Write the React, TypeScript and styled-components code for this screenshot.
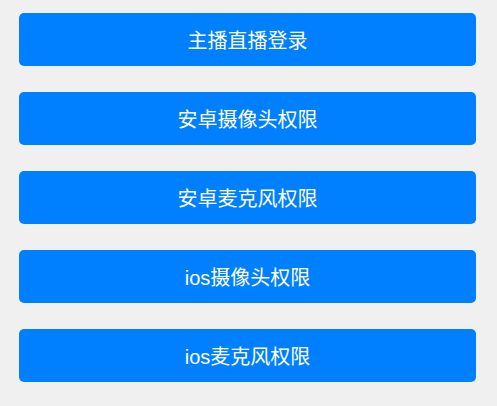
import * as React from "react";
import styled, { createGlobalStyle } from "styled-components";

const GlobalStyle = createGlobalStyle`
	html, body {
		margin: 0;
		padding: 0;
		background-color: #f0f0f0;
	}
	body {
		font-family: "Noto Sans CJK SC", "Liberation Sans", sans-serif;
	}
`;

const Page = styled.div`
	display: flex;
	flex-direction: column;
	gap: 26px;
	padding: 13px 21px 24px 19px;
	min-height: 406px;
	box-sizing: border-box;
`;

const ActionBtn = styled.button`
	display: flex;
	align-items: center;
	justify-content: center;
	height: 53px;
	width: 100%;
	border: none;
	border-radius: 5px;
	background-color: #0080ff;
	color: #ffffff;
	font-family: "Liberation Sans", "Noto Sans CJK SC", sans-serif;
	font-size: 20px;
	padding: 0;
	&:hover {
		cursor: pointer;
	}
`;

const actions = [
	"主播直播登录",
	"安卓摄像头权限",
	"安卓麦克风权限",
	"ios摄像头权限",
	"ios麦克风权限",
];

const App: React.FC = () => (
	<>
		<GlobalStyle />
		<Page>
			{actions.map((label) => (
				<ActionBtn key={label}>{label}</ActionBtn>
			))}
		</Page>
	</>
);

export default App;
